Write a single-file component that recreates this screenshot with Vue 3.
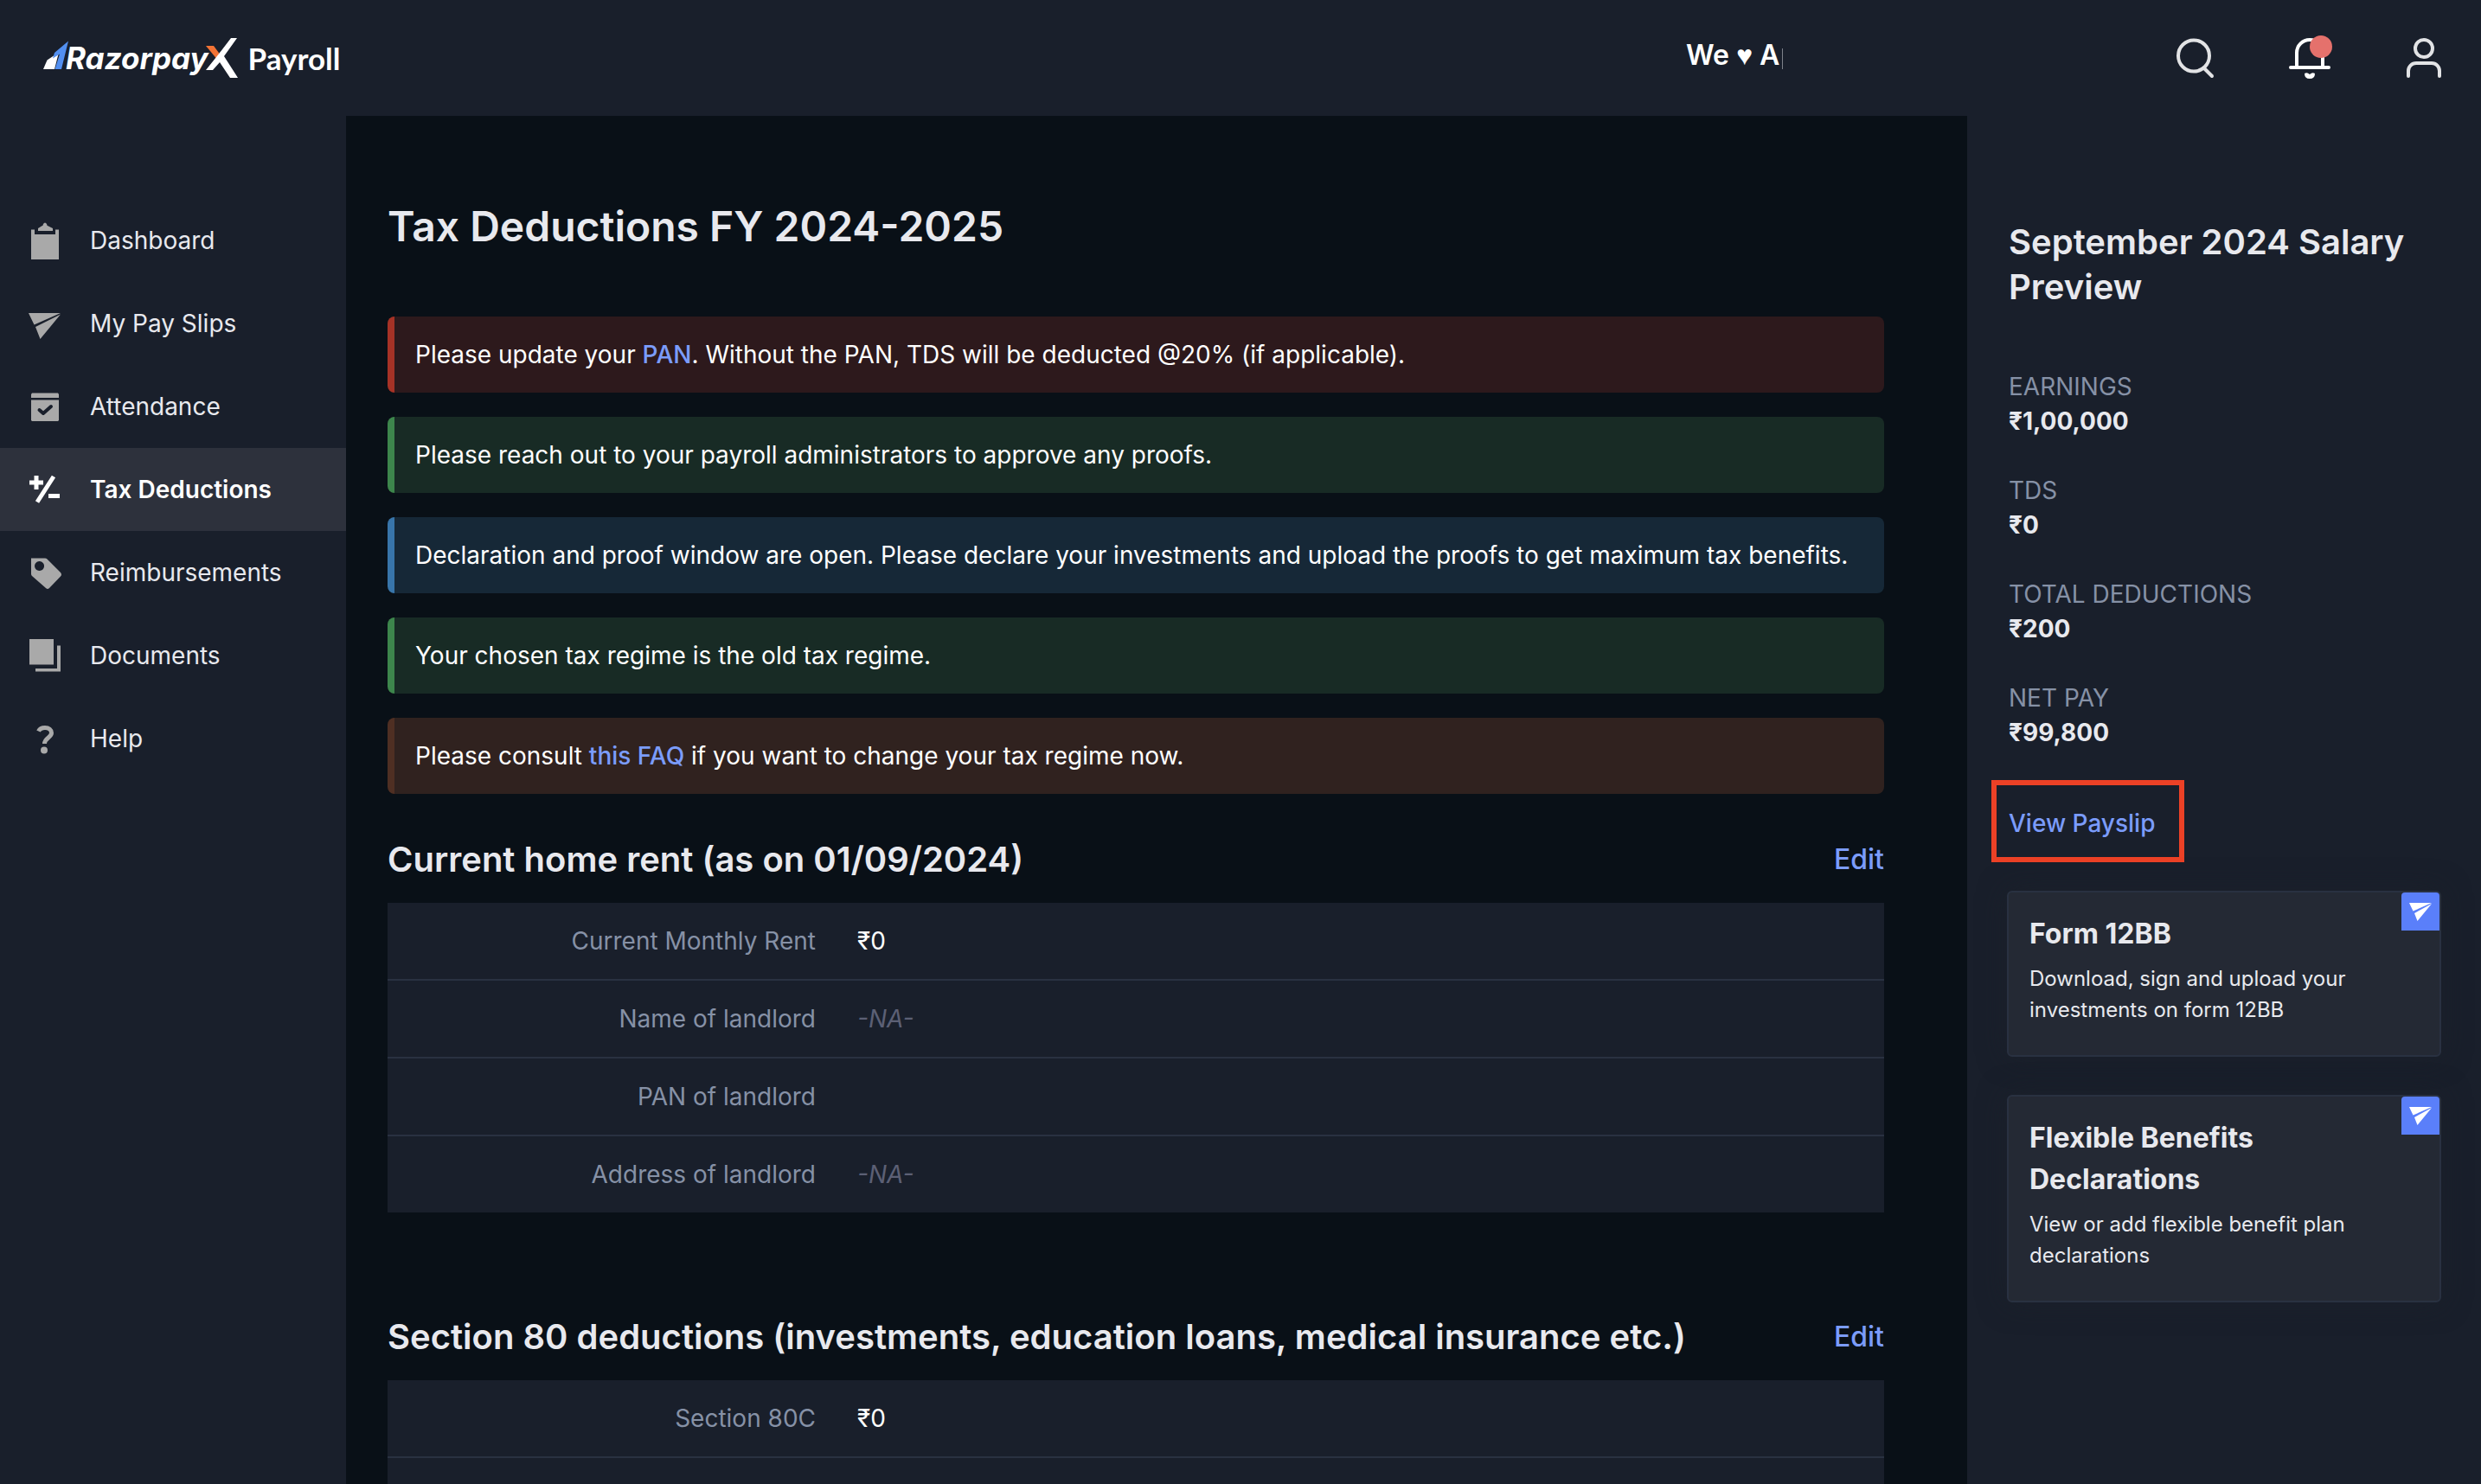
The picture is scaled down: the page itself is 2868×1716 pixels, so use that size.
<script setup>
const navItems = [
  { label: 'Dashboard', icon: 'clipboard' },
  { label: 'My Pay Slips', icon: 'plane' },
  { label: 'Attendance', icon: 'attendance' },
  { label: 'Tax Deductions', icon: 'tax', active: true },
  { label: 'Reimbursements', icon: 'tag' },
  { label: 'Documents', icon: 'documents' },
  { label: 'Help', icon: 'help' },
]

const alerts = [
  { tone: 'danger', before: 'Please update your ', link: 'PAN', after: '. Without the PAN, TDS will be deducted @20% (if applicable).' },
  { tone: 'success', before: 'Please reach out to your payroll administrators to approve any proofs.' },
  { tone: 'info', before: 'Declaration and proof window are open. Please declare your investments and upload the proofs to get maximum tax benefits.' },
  { tone: 'success', before: 'Your chosen tax regime is the old tax regime.' },
  { tone: 'warning', before: 'Please consult ', link: 'this FAQ', after: ' if you want to change your tax regime now.' },
]

const sections = [
  {
    title: 'Current home rent (as on 01/09/2024)',
    rows: [
      { label: 'Current Monthly Rent', value: '₹0' },
      { label: 'Name of landlord', value: '-NA-', empty: true },
      { label: 'PAN of landlord', value: '' },
      { label: 'Address of landlord', value: '-NA-', empty: true },
    ],
  },
  {
    title: 'Section 80 deductions (investments, education loans, medical insurance etc.)',
    rows: [
      { label: 'Section 80C', value: '₹0' },
      { label: '', value: '' },
    ],
  },
]

const salary = [
  { label: 'EARNINGS', value: '₹1,00,000' },
  { label: 'TDS', value: '₹0' },
  { label: 'TOTAL DEDUCTIONS', value: '₹200' },
  { label: 'NET PAY', value: '₹99,800' },
]

const cards = [
  { title: 'Form 12BB', text: 'Download, sign and upload your investments on form 12BB' },
  { title: 'Flexible Benefits Declarations', text: 'View or add flexible benefit plan declarations' },
]
</script>

<template>
  <div class="app">
    <header class="topbar">
      <a class="brand" href="#" aria-label="RazorpayX Payroll">
        <svg class="brand-mark" width="30" height="34" viewBox="0 0 30 34" aria-hidden="true">
          <path fill="#fff" d="M0 33 4.500 22.500 18 13.500 13 33Z" />
          <path fill="#528ff0" d="M13 14 11 20.500 19 15.500 13.500 33H21L29 .500Z" />
        </svg>
        <span class="brand-name">Razorpay</span>
        <svg class="brand-x" width="38" height="48" viewBox="0 0 38 48" aria-hidden="true">
          <path fill="#f37335" d="M1 10H10L17 19.500 13 24.500Z" />
          <path fill="#fff" d="M30 1H37L22 22 38 47H29L17 29 9 38H1L15 20.500Z" />
        </svg>
        <span class="brand-product">Payroll</span>
      </a>
      <div class="ticker"><span>We <span class="heart">♥</span> A</span><i class="caret"></i></div>
      <div class="actions">
        <button type="button" aria-label="Search">
          <svg width="48" height="48" viewBox="0 0 48 48" fill="none" stroke="#e2e3e5" stroke-width="4" stroke-linecap="round">
            <circle cx="24" cy="21.500" r="18" /><path d="M36 36l9 9" />
          </svg>
        </button>
        <button type="button" aria-label="Notifications">
          <svg width="48" height="48" viewBox="0 0 48 48" fill="none" stroke="#fff" stroke-width="4" stroke-linecap="round" stroke-linejoin="round">
            <path d="M3 35h44M10 34V18a15 15 0 0 1 30 0v16" />
            <path fill="#fff" stroke="none" d="M19 42q3-2 6 1q3-3 6-1q0 6-6 6t-6-6Z" />
            <circle cx="38" cy="11" r="13" fill="#e5716c" stroke="none" />
          </svg>
        </button>
        <button type="button" aria-label="Account">
          <svg width="48" height="48" viewBox="0 0 48 48" fill="none" stroke="#e2e3e5" stroke-width="4" stroke-linecap="round">
            <circle cx="24" cy="13" r="10" /><path d="M6 45v-6a9 9 0 0 1 9-9h18a9 9 0 0 1 9 9v6" />
          </svg>
        </button>
      </div>
    </header>

    <nav class="sidebar" aria-label="Main">
      <a v-for="item in navItems" :key="item.label" href="#" class="nav-item" :class="{ active: item.active }">
        <svg width="40" height="48" viewBox="0 0 40 48" fill="currentColor" aria-hidden="true">
          <path v-if="item.icon === 'clipboard'" d="M4 11.500H8V17H32V11.500H36V46H4ZM12 13V10L16 7.500Q18 7 18 5Q20 2 22 5Q22 7 24 7.500L29 10V13Z" />
          <path v-else-if="item.icon === 'plane'" d="M1 12H38L7.500 25.500ZM38 13.500 9 28 14.500 42Z" />
          <g v-else-if="item.icon === 'attendance'">
            <path d="M5 8.500H35L36 10V14H4V10ZM4 16.500H36V40L35 41H5L4 40Z" />
            <path d="M13.500 28 18 32 27 24" fill="none" stroke="#191f2b" stroke-width="4" stroke-linecap="round" stroke-linejoin="round" />
          </g>
          <path v-else-if="item.icon === 'tax'" d="M30 9 11 38.500M2 16H18M10 8V24M24 31.500H37" fill="none" stroke="currentColor" stroke-width="5" />
          <path v-else-if="item.icon === 'tag'" fill-rule="evenodd" d="M4 7.500H20Q21.500 7.500 22.500 8.500L38 24Q40 26.500 38 28.500L25 42Q23 44 21 42L5 28Q4 27 4 25.500ZM13.500 11a5.500 5.500 0 1 0 .1 0Z" />
          <path v-else-if="item.icon === 'documents'" d="M2 5H30V34.500H2ZM34 12.500H38V42.500H9V39H34Z" />
          <g v-else>
            <path d="M12.500 15.500C14 12.500 17 11.500 20 11.500C24.500 11.500 27.500 14 27.500 17.500C27.500 23 19.500 23 19.500 30" fill="none" stroke="currentColor" stroke-width="5" />
            <circle cx="19" cy="37.500" r="4" />
          </g>
        </svg>
        <span>{{ item.label }}</span>
      </a>
    </nav>

    <main class="content">
      <h1>Tax Deductions FY 2024-2025</h1>
      <div class="alerts">
        <p v-for="(alert, i) in alerts" :key="i" class="alert" :class="alert.tone">{{ alert.before }}<a v-if="alert.link" href="#">{{ alert.link }}</a>{{ alert.after }}</p>
      </div>
      <section v-for="section in sections" :key="section.title" class="section">
        <div class="section-head">
          <h2>{{ section.title }}</h2>
          <a href="#">Edit</a>
        </div>
        <table>
          <tbody>
            <tr v-for="(row, i) in section.rows" :key="i">
              <th scope="row">{{ row.label }}</th>
              <td :class="{ empty: row.empty }">{{ row.value }}</td>
            </tr>
          </tbody>
        </table>
      </section>
    </main>

    <aside class="preview">
      <h2>September 2024 Salary Preview</h2>
      <dl>
        <div v-for="entry in salary" :key="entry.label">
          <dt>{{ entry.label }}</dt>
          <dd>{{ entry.value }}</dd>
        </div>
      </dl>
      <a class="payslip" href="#">View Payslip</a>
      <a v-for="card in cards" :key="card.title" class="card" href="#">
        <h3>{{ card.title }}</h3>
        <p>{{ card.text }}</p>
        <span class="card-badge">
          <svg width="26" height="24" viewBox="0 0 26 24" fill="#fff" aria-hidden="true">
            <path d="M0 2H26L4.500 11.500ZM26 3 6 14 9.500 23Z" />
          </svg>
        </span>
      </a>
    </aside>
  </div>
</template>

<style>
body {
  margin: 0;
  background: #191f2b;
}
</style>

<style scoped>
.app {
  display: grid;
  grid-template-columns: 400px minmax(0, 1fr) 594px;
  grid-template-rows: 134px minmax(0, 1fr);
  height: 100vh;
  overflow: hidden;
  background: #191f2b;
  color: #e8e9ee;
  font-family: Inter, "Liberation Sans", sans-serif;
  font-size: 28px;
  line-height: 40px;
}
a {
  color: #7b9cfb;
  font-weight: 500;
  text-decoration: none;
}
h1, h2, h3, p, dl, dd {
  margin: 0;
}
.topbar {
  grid-column: 1 / -1;
  display: flex;
  align-items: center;
  padding: 0 42px 0 50px;
}
.brand {
  display: flex;
  align-items: center;
  margin-right: auto;
  color: #fff;
  font-size: 35px;
}
.brand-mark {
  margin-right: -4px;
  margin-bottom: 6px;
}
.brand-name {
  font-weight: 700;
  font-style: italic;
}
.brand-x {
  margin-left: -4px;
}
.brand-product {
  margin-left: 12px;
  font-family: Lato, "Liberation Sans", sans-serif;
  font-weight: 700;
}
.ticker {
  display: flex;
  align-items: center;
  width: 563px;
  color: #fff;
  font-size: 32px;
  font-weight: 600;
  padding-bottom: 6px;
}
.heart {
  font-family: "Liberation Sans", sans-serif;
}
.caret {
  width: 1px;
  height: 24px;
  margin: 8px 0 0 3px;
  background: #7d818a;
}
.actions {
  display: flex;
  gap: 85px;
}
.actions button {
  display: flex;
  padding: 0;
  border: 0;
  background: none;
}
.actions svg {
  overflow: visible;
}
.sidebar {
  padding-top: 96px;
}
.nav-item {
  display: flex;
  align-items: center;
  gap: 32px;
  height: 96px;
  padding: 0 32px;
  color: #e8e9ee;
  font-weight: 400;
}
.nav-item svg {
  color: #a9a9a9;
}
.nav-item.active {
  background: #2d313c;
  color: #fff;
  font-weight: 600;
}
.nav-item.active svg {
  color: #fff;
}
.content {
  overflow: hidden;
  padding: 96px 96px 0 48px;
  background: #091017;
}
h1 {
  font-size: 48px;
  line-height: 64px;
  font-weight: 600;
}
.alerts {
  display: grid;
  gap: 28px;
  margin: 72px 0 50px;
}
.alert {
  padding: 24px;
  border-left: 8px solid;
  border-radius: 8px;
  color: #fff;
}
.danger {
  border-color: #a63226;
  background: #2d191c;
}
.success {
  border-color: #3d864c;
  background: #182b25;
}
.info {
  border-color: #3875aa;
  background: #162837;
}
.warning {
  border-color: #4f2f23;
  background: #30221f;
}
.section {
  margin-bottom: 118px;
}
.section-head {
  display: flex;
  align-items: center;
  justify-content: space-between;
  margin-bottom: 24px;
}
h2 {
  font-size: 40px;
  line-height: 52px;
  font-weight: 600;
}
.section-head a {
  font-size: 32px;
}
table {
  width: 100%;
  border-collapse: separate;
  border-spacing: 0;
  table-layout: fixed;
  background: #191f2b;
}
th, td {
  height: 40px;
  padding: 24px;
  font-weight: 400;
}
th {
  width: 30%;
  box-sizing: border-box;
  height: 88px;
  color: #8691a6;
  text-align: right;
}
td {
  color: #fff;
  text-align: left;
}
tr + tr th,
tr + tr td {
  border-top: 2px solid #293141;
}
tr + tr th {
  height: 90px;
}
.empty {
  color: #5c6075;
  font-style: italic;
}
.preview {
  padding: 120px 46px 0 46px;
}
.preview h2,
.preview dl {
  margin-left: 2px;
}
dl {
  display: grid;
  gap: 40px;
  margin-top: 69px;
}
dt {
  color: #8691a6;
}
dd {
  font-weight: 700;
}
.payslip {
  display: block;
  width: fit-content;
  margin: 35px 0 33px -18px;
  padding: 24px 28px 19px 14px;
  border: 6px solid #ec4126;
}
.card {
  position: relative;
  display: block;
  margin-bottom: 44px;
  padding: 24px 56px 34px 24px;
  border: 2px solid #293141;
  border-radius: 6px;
  background: #242934;
  box-shadow: 0 0 32px rgba(30, 33, 42, 0.5);
  color: #e8e9ee;
  font-weight: 400;
}
h3 {
  margin-bottom: 10px;
  font-size: 32px;
  line-height: 48px;
  font-weight: 700;
}
.card p {
  font-size: 24px;
  line-height: 36px;
}
.card-badge {
  position: absolute;
  top: 0;
  right: 0;
  display: flex;
  align-items: center;
  justify-content: center;
  width: 44px;
  height: 44px;
  border-radius: 4px 4px 0 0;
  background: #5a7ffa;
}
</style>
